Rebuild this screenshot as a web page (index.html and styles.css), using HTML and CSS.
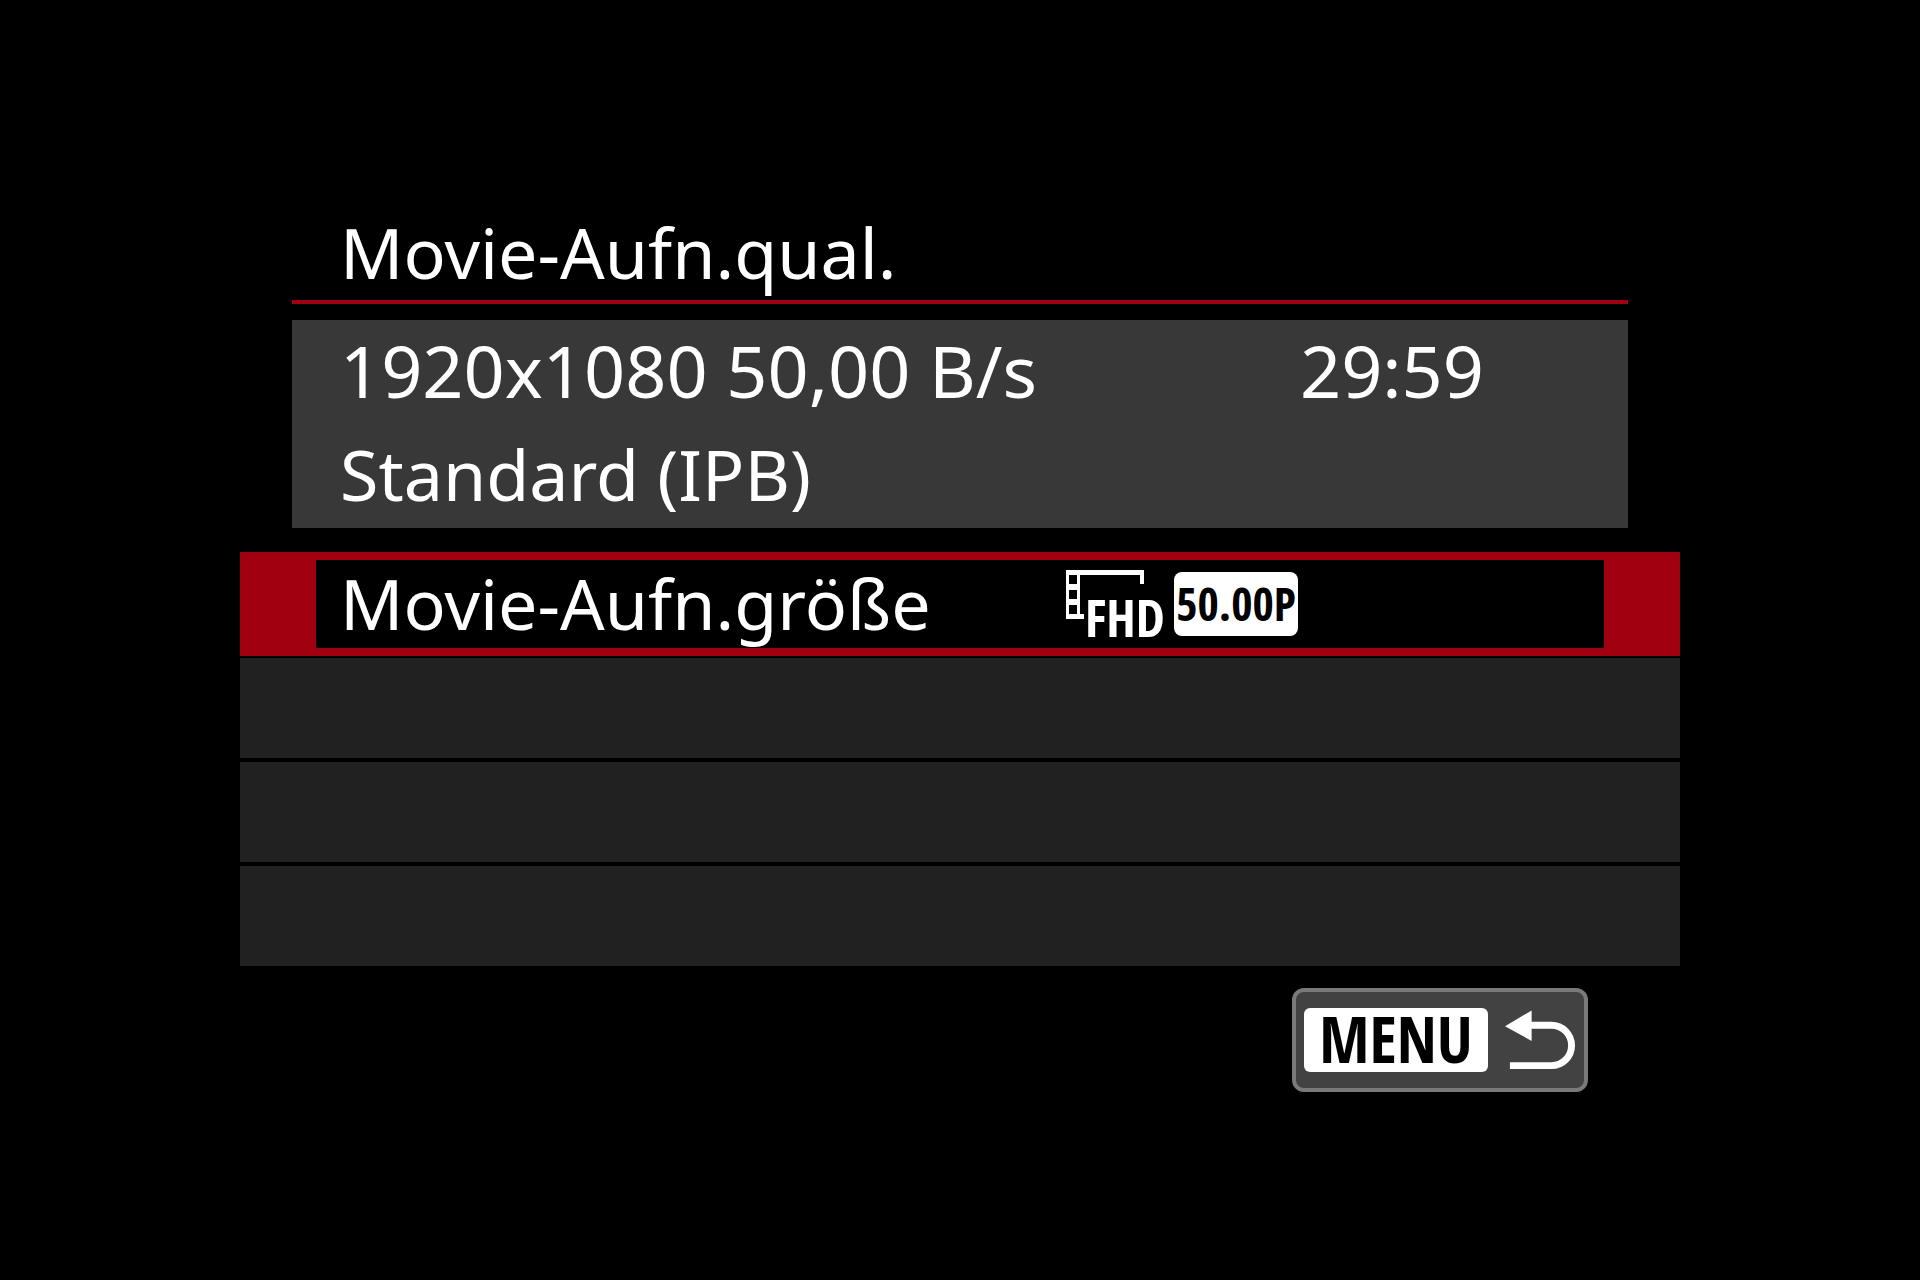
FILE: index.html
```html
<!DOCTYPE html>
<html lang="de">
<head>
<meta charset="utf-8">
<meta name="viewport" content="width=device-width, initial-scale=1">
<title>Movie-Aufn.qual.</title>
<link rel="stylesheet" href="styles.css">
</head>
<body>
<main class="screen">
  <h1 class="title">Movie-Aufn.qual.</h1>
  <section class="summary">
    <div class="line figures"><span>1920x1080 50,00 B/s</span><span>29:59</span></div>
    <div class="line">Standard (IPB)</div>
  </section>
  <div class="list">
    <button class="row selected" type="button">
      <span class="label">Movie-Aufn.größe</span>
      <span class="value">
        <svg class="film" viewBox="0 0 100 88" aria-hidden="true">
          <path fill="#fff" fill-rule="evenodd" d="M0 10H78V24H74V15H14V54H18V59H0ZM3 15V24H11V15ZM3 30V39H11V30ZM3 45V54H11V45Z"/>
          <text class="film-text" x="19" y="77">FHD</text>
        </svg>
        <span class="rate">50.00P</span>
      </span>
    </button>
    <div class="row"></div>
    <div class="row"></div>
    <div class="row"></div>
  </div>
  <footer class="footer">
    <button class="menu" type="button" aria-label="MENU zurück">
      <span class="key">MENU</span>
      <svg class="back" viewBox="0 0 72 60" aria-hidden="true">
        <path fill="#fff" d="M0 16L27 0V31Z"/>
        <path fill="none" stroke="#fff" stroke-width="7" d="M25 15H47A20.500 20.500 0 0 1 47 56H5"/>
      </svg>
    </button>
  </footer>
</main>
</body>
</html>
```
FILE: styles.css
```css
* {
  box-sizing: border-box;
}

body {
  margin: 0;
  background: #000;
  color: #fff;
  font-family: "Noto Sans", sans-serif;
  font-size: 70px;
}

button {
  border: 0;
  color: inherit;
  font: inherit;
  text-align: left;
}

.screen {
  width: 75%;
  margin: 0 auto;
  padding: 204px 0 80px;
}

.title {
  margin: 0 52px 16px;
  padding-left: 48px;
  border-bottom: 4px solid #a0000f;
  font-size: 70px;
  font-weight: 400;
  line-height: 96px;
}

.summary {
  margin: 0 52px 24px;
  padding: 0 144px 0 48px;
  background: #383838;
}

.line {
  display: flex;
  justify-content: space-between;
  padding-bottom: 4px;
  line-height: 100px;
}

.figures {
  font-size: 72px;
}

.list {
  display: flex;
  flex-direction: column;
  gap: 4px;
}

.row {
  height: 100px;
  background: #212121;
}

.selected {
  display: flex;
  width: 100%;
  height: 104px;
  margin-bottom: -2px;
  padding: 0 0 0 24px;
  border: solid #a0000f;
  border-width: 8px 76px;
  background: #000;
  line-height: 86px;
}

.label {
  flex: 1;
}

.value {
  display: flex;
  flex: 0 0 538px;
  align-items: center;
  gap: 8px;
  height: 88px;
}

.film {
  width: 100px;
  height: 88px;
  overflow: visible;
}

.film-text,
.rate,
.key {
  font-family: "Open Sans Condensed", "Roboto Condensed", "Liberation Sans Narrow", sans-serif;
  font-weight: 700;
}

.film-text {
  fill: #fff;
  font-size: 52px;
}

.rate {
  width: 124px;
  height: 64px;
  border-radius: 8px;
  background: #fff;
  color: #000;
  font-size: 46px;
  line-height: 62px;
  text-align: center;
}

.footer {
  display: flex;
  justify-content: flex-end;
  padding: 22px 92px 0 0;
}

.menu {
  display: flex;
  align-items: center;
  gap: 17px;
  height: 104px;
  padding: 0 8px;
  border: 4px solid #7a7a7a;
  border-radius: 12px;
  background: #424242;
}

.key {
  width: 184px;
  height: 64px;
  border-radius: 6px;
  background: #fff;
  color: #000;
  font-size: 64px;
  line-height: 62px;
  text-align: center;
}

.back {
  width: 71px;
  height: 60px;
}
```
